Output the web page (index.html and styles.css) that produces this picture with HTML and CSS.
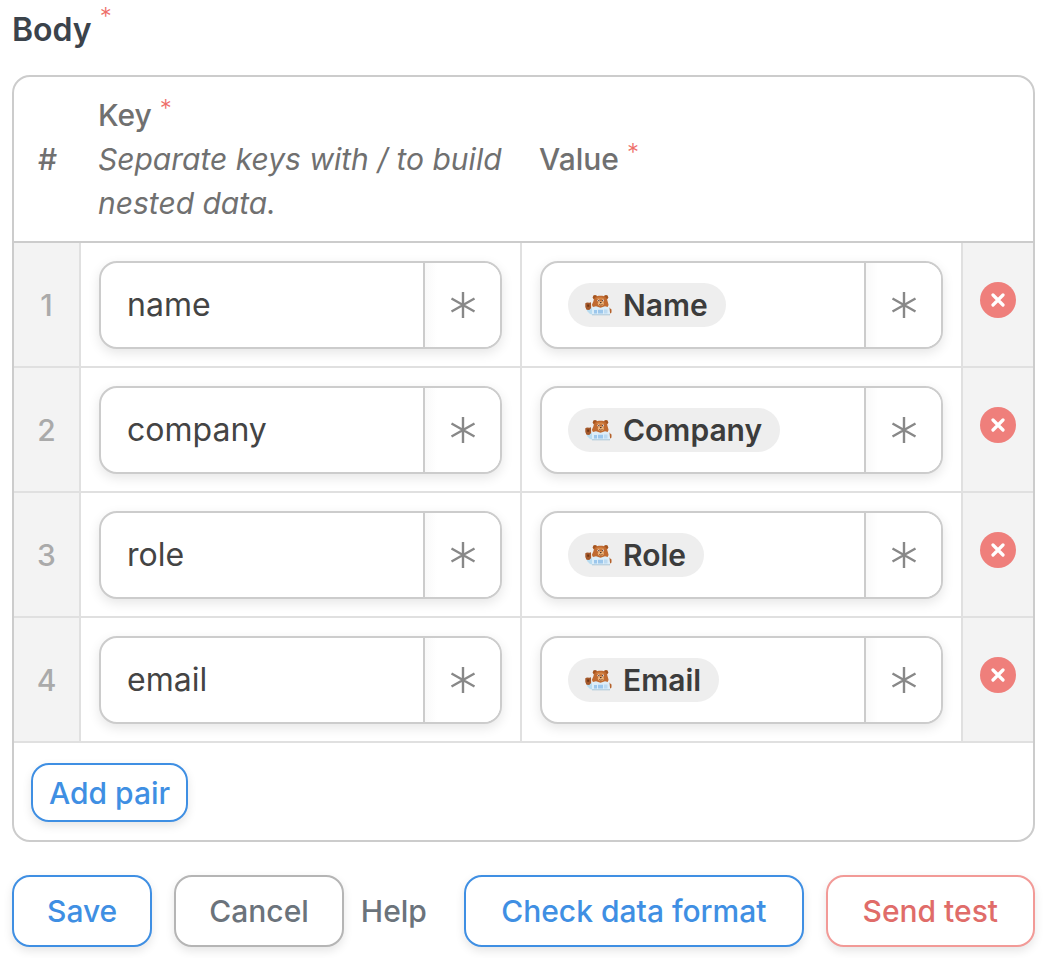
FILE: index.html
```
<!DOCTYPE html>
<html lang="en">
<head>
    <meta charset="UTF-8">
    <title>Body</title>
    <link rel="stylesheet" href="styles.css">
</head>

<body>
<svg class="sprite" aria-hidden="true">
    <symbol id="asterisk" viewBox="0 0 26 28">
        <path d="M13 1v26M1.500 7.500l23 13M24.500 7.500l-23 13" fill="none" stroke="currentColor" stroke-width="2.400"/>
    </symbol>
    <symbol id="cross" viewBox="0 0 14 14">
        <path d="M2 2l10 10M12 2l-10 10" fill="none" stroke="currentColor" stroke-width="3.200" stroke-linecap="round"/>
    </symbol>
    <symbol id="bear" viewBox="0 0 27 21">
        <path d="M2 14l5-1 3 1-1 6-4-1-3-3z" fill="#b9dcf0"/>
        <path d="M.3 8.200L2 7.500l2.500.3L6 7.200l.2 5.800-2 2-2.700-.2L.3 12z" fill="#a4582a"/>
        <path d="M2.200 9.500h2v2.300h-2z" fill="#6d3414"/>
        <path d="M24 12.500l2.500 2v3L24 19.500z" fill="#b5622b"/>
        <circle cx="10" cy="2.300" r="2.200" fill="#a4541f"/>
        <circle cx="21" cy="2.300" r="2.200" fill="#a4541f"/>
        <path d="M15.500.8c4.500 0 6.500 2 7 5.200l1 3.500c0 3-3 4.500-8 4.500s-8.500-1.500-8.500-4.500L8.500 6c.5-3.200 2.500-5.200 7-5.200z" fill="#c06a30"/>
        <path d="M11 3.500c1-1.500 7-1.500 8.500 0l-2.500 1h-3.500z" fill="#d58748"/>
        <ellipse cx="15.800" cy="8.500" rx="3" ry="2.300" fill="#ecb47a"/>
        <circle cx="13.500" cy="5.500" r="1.100" fill="#fff"/>
        <circle cx="18" cy="5.500" r="1.100" fill="#fff"/>
        <circle cx="13.800" cy="5.600" r=".7" fill="#38231a"/>
        <circle cx="17.700" cy="5.600" r=".7" fill="#38231a"/>
        <path d="M14.800 7h2l-1 1.400z" fill="#38231a"/>
        <path d="M14 9.500q1.800 1.300 3.600 0" fill="none" stroke="#713716" stroke-width=".7"/>
        <path d="M7 12.200l4-1 4.500 1.600 4.500-1.600 4.500 1.300.7 7-18.200.3z" fill="#dcedf8"/>
        <path d="M9 15h3v3.500H9zM13 14.800h5v3.700h-5z" fill="#9cc7ec"/>
        <path d="M19 14.500h3.500v4H19z" fill="#bcdaf1"/>
        <path d="M7 19.800h18" stroke="#9dbfd2" stroke-width=".8"/>
    </symbol>
</svg>

<form class="mapping">
    <h1 class="mapping__title">Body <span class="required">*</span></h1>

    <div class="card">
        <table class="pairs">
            <thead>
                <tr>
                    <th class="pairs__number">#</th>
                    <th class="pairs__field">Key <span class="required">*</span><br><em>Separate keys with / to build nested data.</em></th>
                    <th class="pairs__field">Value <span class="required">*</span></th>
                    <th class="pairs__delete"></th>
                </tr>
            </thead>
            <tbody>
                <tr>
                    <td class="pairs__number">1</td>
                    <td class="pairs__field">
                        <div class="field">
                            <input type="text" class="field__input" aria-label="Key 1" value="name">
                            <button type="button" class="field__insert" aria-label="Insert into key"><svg><use href="#asterisk"/></svg></button>
                        </div>
                    </td>
                    <td class="pairs__field">
                        <div class="field">
                            <div class="field__tokens"><span class="token"><svg><use href="#bear"/></svg>Name</span></div>
                            <button type="button" class="field__insert" aria-label="Insert into value"><svg><use href="#asterisk"/></svg></button>
                        </div>
                    </td>
                    <td class="pairs__delete"><button type="button" class="delete" aria-label="Delete pair 1"><svg><use href="#cross"/></svg></button></td>
                </tr>
                <tr>
                    <td class="pairs__number">2</td>
                    <td class="pairs__field">
                        <div class="field">
                            <input type="text" class="field__input" aria-label="Key 2" value="company">
                            <button type="button" class="field__insert" aria-label="Insert into key"><svg><use href="#asterisk"/></svg></button>
                        </div>
                    </td>
                    <td class="pairs__field">
                        <div class="field">
                            <div class="field__tokens"><span class="token"><svg><use href="#bear"/></svg>Company</span></div>
                            <button type="button" class="field__insert" aria-label="Insert into value"><svg><use href="#asterisk"/></svg></button>
                        </div>
                    </td>
                    <td class="pairs__delete"><button type="button" class="delete" aria-label="Delete pair 2"><svg><use href="#cross"/></svg></button></td>
                </tr>
                <tr>
                    <td class="pairs__number">3</td>
                    <td class="pairs__field">
                        <div class="field">
                            <input type="text" class="field__input" aria-label="Key 3" value="role">
                            <button type="button" class="field__insert" aria-label="Insert into key"><svg><use href="#asterisk"/></svg></button>
                        </div>
                    </td>
                    <td class="pairs__field">
                        <div class="field">
                            <div class="field__tokens"><span class="token"><svg><use href="#bear"/></svg>Role</span></div>
                            <button type="button" class="field__insert" aria-label="Insert into value"><svg><use href="#asterisk"/></svg></button>
                        </div>
                    </td>
                    <td class="pairs__delete"><button type="button" class="delete" aria-label="Delete pair 3"><svg><use href="#cross"/></svg></button></td>
                </tr>
                <tr>
                    <td class="pairs__number">4</td>
                    <td class="pairs__field">
                        <div class="field">
                            <input type="text" class="field__input" aria-label="Key 4" value="email">
                            <button type="button" class="field__insert" aria-label="Insert into key"><svg><use href="#asterisk"/></svg></button>
                        </div>
                    </td>
                    <td class="pairs__field">
                        <div class="field">
                            <div class="field__tokens"><span class="token"><svg><use href="#bear"/></svg>Email</span></div>
                            <button type="button" class="field__insert" aria-label="Insert into value"><svg><use href="#asterisk"/></svg></button>
                        </div>
                    </td>
                    <td class="pairs__delete"><button type="button" class="delete" aria-label="Delete pair 4"><svg><use href="#cross"/></svg></button></td>
                </tr>
            </tbody>
        </table>
        <div class="card__footer">
            <button type="button" class="button button--blue button--small">Add pair</button>
        </div>
    </div>

    <div class="actions">
        <button type="submit" class="button button--blue">Save</button>
        <button type="button" class="button button--grey">Cancel</button>
        <a href="#" class="help">Help</a>
        <div class="actions__test">
            <button type="button" class="button button--blue">Check data format</button>
            <button type="button" class="button button--red">Send test</button>
        </div>
    </div>
</form>
</body>
</html>
```
FILE: styles.css
```
* {
    box-sizing: border-box;
}

body {
    margin: 0;
    background-color: white;
    font-family: Inter, "Liberation Sans", sans-serif;
    font-size: 30px;
    line-height: 44px;
    color: #444;
}

button, input {
    font: inherit;
    color: inherit;
}

.sprite {
    display: none;
}

.mapping {
    padding: 8px 13px 11px 12px;
}

.mapping__title {
    margin: 0 0 23px;
    font-size: 32px;
    font-weight: 600;
    line-height: 44px;
    color: #3b434b;
}

.required {
    font-size: 24px;
    font-weight: 300;
    line-height: 0;
    vertical-align: 9px;
    color: #ee6e69;
}

.mapping__title .required {
    vertical-align: 16px;
}

.card {
    border: 2px solid #ccc;
    border-radius: 18px;
    overflow: hidden;
}

.pairs {
    width: 100%;
    table-layout: fixed;
    border-spacing: 0;
}

.pairs th {
    padding: 16px 17px;
    border-bottom: 2px solid #ccc;
    font-weight: 500;
    text-align: left;
    color: #707070;
}

.pairs th em {
    font-weight: 400;
}

.pairs td {
    padding: 18px 18px 17px;
    border-right: 2px solid #e0e0e0;
    border-bottom: 2px solid #e0e0e0;
}

.pairs .pairs__number {
    width: 67px;
    padding-left: 0;
    padding-right: 0;
    text-align: center;
}

.pairs td.pairs__number {
    background-color: #f3f3f3;
    font-weight: 500;
    color: #aaa;
}

.pairs .pairs__delete {
    width: 70px;
}

.pairs td.pairs__delete {
    padding: 39px 0 0;
    border-right: none;
    background-color: #f3f3f3;
    text-align: center;
    vertical-align: top;
}

.field {
    display: flex;
    height: 88px;
    border: 2px solid #ccc;
    border-radius: 18px;
    background-color: white;
    box-shadow: 0 4px 12px rgba(0, 0, 0, .1);
    overflow: hidden;
}

.field__input {
    flex: 1;
    min-width: 0;
    padding: 0 26px;
    border: none;
    outline: none;
    background: none;
    font-size: 32px;
}

.field__tokens {
    display: flex;
    flex: 1;
    align-items: center;
    min-width: 0;
    padding: 0 26px;
}

.token {
    display: flex;
    align-items: center;
    gap: 11px;
    height: 44px;
    padding: 0 18px 0 17px;
    border-radius: 22px;
    background-color: #eee;
    font-weight: 600;
    color: #3c3c3c;
}

.token svg {
    width: 27px;
    height: 21px;
}

.field__insert {
    display: flex;
    align-items: center;
    justify-content: center;
    width: 77px;
    padding: 0;
    border: none;
    border-left: 2px solid #ccc;
    background: linear-gradient(to right, #f9f9f9, white 12px);
    color: #888;
}

.field__insert svg {
    width: 26px;
    height: 28px;
}

.delete {
    display: inline-flex;
    align-items: center;
    justify-content: center;
    width: 36px;
    height: 36px;
    padding: 0;
    border: none;
    border-radius: 50%;
    background-color: #ef7f7b;
    color: white;
    vertical-align: top;
}

.delete svg {
    width: 14px;
    height: 14px;
}

.card__footer {
    padding: 20px 17px 18px;
}

.button {
    height: 72px;
    padding: 0 33px;
    border: 2px solid;
    border-radius: 18px;
    background-color: white;
    box-shadow: 0 4px 10px rgba(0, 0, 0, .1);
    font-weight: 500;
    white-space: nowrap;
}

.button--blue {
    border-color: #3f8fe3;
    color: #3f8fe3;
}

.button--grey {
    border-color: #b5b5b5;
    color: #6b737b;
}

.button--red {
    border-color: #f29a97;
    color: #e06c69;
}

.button--small {
    display: block;
    height: 59px;
    padding: 0 16px;
}

.actions, .actions__test {
    display: flex;
    align-items: center;
    gap: 22px;
}

.actions {
    margin-top: 33px;
}

.actions__test {
    margin-left: auto;
}

.actions__test .button {
    padding: 0 35px;
}

.help {
    margin-left: -5px;
    font-weight: 500;
    text-decoration: none;
    color: #6b737b;
}
```
